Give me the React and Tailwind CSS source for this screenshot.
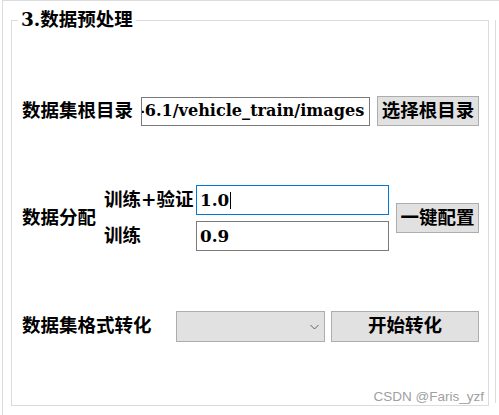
import React from 'react';

const font = "font-['DejaVu_Serif','Noto_Sans_CJK_SC',serif] font-bold text-black";

const Button = ({ children, className }) => (
  <div
    className={`flex items-center justify-center h-[30px] bg-[#e1e1e1] border border-[#adadad] text-[18.5px] leading-none ${font} ${className}`}
  >
    {children}
  </div>
);

const App = () => {
  return (
    <div className="w-[499px] h-[415px] bg-white overflow-hidden pl-[2px]">
      <div className="flex h-full border-t border-l border-[#dcdcdc]">
        {/* 分组框 */}
        <div className="relative mt-[19px] ml-[8px] w-[478px] h-[386px] border border-[#dcdcdc]">
          <div className={`absolute left-[6px] -top-[13px] bg-white px-[3px] text-[18.5px] leading-[24px] ${font}`}>
            3.数据预处理
          </div>

          <div className={`pl-[10px] pt-[75px] text-[18.5px] leading-none ${font}`}>
            {/* 根目录 */}
            <div className="flex items-center h-[30px]">
              <div className="w-[119px] whitespace-nowrap">数据集根目录</div>
              <div className="flex items-center w-[229px] h-[29px] border border-[#7a7a7a] overflow-hidden whitespace-nowrap font-['DejaVu_Serif',serif] text-[16.1px]">
                <span className="-ml-[4px]">-6.1/vehicle_train/images</span>
              </div>
              <Button className="ml-[7px] w-[102px]">选择根目录</Button>
            </div>

            {/* 数据分配 */}
            <div className="flex items-center mt-[59px]">
              <div className="w-[82px] whitespace-nowrap">数据分配</div>
              <div className="flex flex-col gap-[6px]">
                <div className="flex items-center">
                  <div className="w-[92px] whitespace-nowrap">训练+验证</div>
                  <div className="flex items-center w-[193px] h-[30px] border border-[#0078d7] pl-[3px] font-['DejaVu_Serif',serif] text-[16.8px]">
                    1.0<span className="ml-[1px] w-[1px] h-[17px] bg-black" />
                  </div>
                </div>
                <div className="flex items-center">
                  <div className="w-[92px] whitespace-nowrap">训练</div>
                  <div className="flex items-center w-[193px] h-[30px] border border-[#7a7a7a] pl-[3px] font-['DejaVu_Serif',serif] text-[16.8px]">
                    0.9
                  </div>
                </div>
              </div>
              <Button className="ml-[7px] w-[83px]">一键配置</Button>
            </div>

            {/* 格式转化 */}
            <div className="flex items-center mt-[60px]">
              <div className="w-[154px] whitespace-nowrap">数据集格式转化</div>
              <div className="flex items-center justify-end w-[149px] h-[31px] bg-[#e1e1e1] border border-[#adadad] pr-[5px]">
                <svg width="9" height="6" viewBox="0 0 9 6">
                  <polyline points="0.5,1 4.5,5 8.5,1" fill="none" stroke="#606060" strokeWidth="1" />
                </svg>
              </div>
              <Button className="ml-[6px] w-[148px] h-[31px]">开始转化</Button>
            </div>
          </div>

          <div className="absolute right-[4px] bottom-[0px] text-[13.5px] leading-[16px] text-[#a0a0a0] font-['Liberation_Sans',Arial,sans-serif]">
            CSDN @Faris_yzf
          </div>
        </div>

        <div className="mt-[19px] ml-[6px] h-[383px] border-l border-[#dcdcdc]" />
      </div>
    </div>
  );
};

export default App;
